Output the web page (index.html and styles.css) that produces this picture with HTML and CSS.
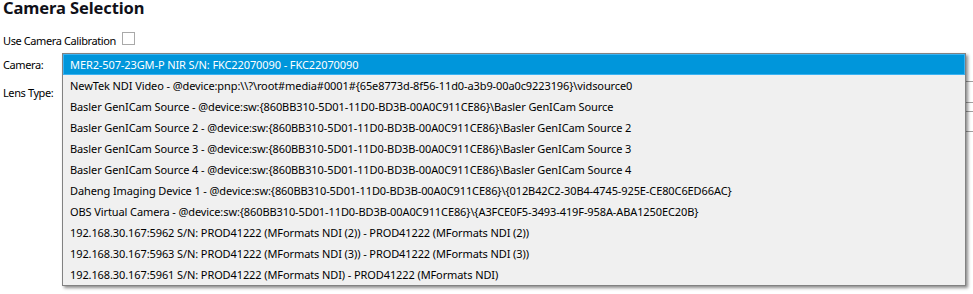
FILE: index.html
```html
<!DOCTYPE html>
<html lang="en">
<head>
  <meta charset="UTF-8">
  <title>Camera Selection</title>
  <link rel="stylesheet" href="styles.css">
</head>
<body>
  <div class="panel">
    <h1>Camera Selection</h1>
    <div class="row check-row">
      <span class="label-inline">Use Camera Calibration</span>
      <span class="checkbox"></span>
    </div>
    <div class="row camera-row">
      <span class="label">Camera:</span>
      <div class="combo-wrap">
        <div class="combo camera-combo"></div>
        <ul class="dropdown">
          <li class="selected">MER2-507-23GM-P NIR S/N: FKC22070090 - FKC22070090</li>
          <li>NewTek NDI Video - @device:pnp:\\?\root#media#0001#{65e8773d-8f56-11d0-a3b9-00a0c9223196}\vidsource0</li>
          <li>Basler GenICam Source - @device:sw:{860BB310-5D01-11D0-BD3B-00A0C911CE86}\Basler GenICam Source</li>
          <li>Basler GenICam Source 2 - @device:sw:{860BB310-5D01-11D0-BD3B-00A0C911CE86}\Basler GenICam Source 2</li>
          <li>Basler GenICam Source 3 - @device:sw:{860BB310-5D01-11D0-BD3B-00A0C911CE86}\Basler GenICam Source 3</li>
          <li>Basler GenICam Source 4 - @device:sw:{860BB310-5D01-11D0-BD3B-00A0C911CE86}\Basler GenICam Source 4</li>
          <li>Daheng Imaging Device 1 - @device:sw:{860BB310-5D01-11D0-BD3B-00A0C911CE86}\{012B42C2-30B4-4745-925E-CE80C6ED66AC}</li>
          <li>OBS Virtual Camera - @device:sw:{860BB310-5D01-11D0-BD3B-00A0C911CE86}\{A3FCE0F5-3493-419F-958A-ABA1250EC20B}</li>
          <li>192.168.30.167:5962 S/N: PROD41222 (MFormats NDI (2)) - PROD41222 (MFormats NDI (2))</li>
          <li>192.168.30.167:5963 S/N: PROD41222 (MFormats NDI (3)) - PROD41222 (MFormats NDI (3))</li>
          <li>192.168.30.167:5961 S/N: PROD41222 (MFormats NDI) - PROD41222 (MFormats NDI)</li>
        </ul>
      </div>
    </div>
    <div class="row lens-row">
      <span class="label">Lens Type:</span>
      <div class="combo"></div>
    </div>
    <div class="row extra-row">
      <span class="label"></span>
      <div class="combo"></div>
    </div>
  </div>
</body>
</html>
```

FILE: styles.css
```css
html, body {
  margin: 0;
  height: 294px;
  background: #ffffff;
}
body {
  color: #000000;
  font-family: 'Noto Sans', sans-serif;
  font-size: 11px;
}
.panel {
  padding-left: 3px;
}
h1 {
  margin: 0;
  font-size: 16.5px;
  font-weight: bold;
  line-height: 15px;
  letter-spacing: -0.1px;
  color: #101018;
}
.row {
  display: flex;
  align-items: flex-start;
  line-height: 21px;
  white-space: nowrap;
  letter-spacing: -0.4px;
}
.check-row {
  margin-top: 15px;
  height: 21px;
}
.label-inline {
  margin-right: 6px;
}
.checkbox {
  margin-top: 2px;
  width: 11px;
  height: 11px;
  border: 1px solid #a9a9a9;
  background: #fff;
}
.label {
  width: 59px;
  flex: none;
}
.camera-row {
  margin-top: 3px;
  height: 21px;
}
.lens-row {
  margin-top: 6px;
  line-height: 23px;
}
.extra-row {
  margin-top: 7px;
}
.combo-wrap {
  position: relative;
  width: 904px;
  flex: none;
}
.combo {
  flex: 1;
  height: 20px;
  border: 1px solid #a0a0a0;
  border-right: none;
  background: #fff;
}
.extra-row .combo {
  height: 19px;
}
.camera-combo {
  height: 19px;
  border-right: 1px solid #a0a0a0;
}
.dropdown {
  position: absolute;
  top: -1px;
  left: 0;
  box-sizing: border-box;
  width: 904px;
  margin: 0;
  padding: 0;
  list-style: none;
  background: #f0f0f0;
  border: 1px solid #828282;
  box-shadow: 2px 2px 3px rgba(0, 0, 0, 0.45);
  letter-spacing: -0.1px;
  z-index: 10;
}
.dropdown li {
  height: 21px;
  line-height: 21px;
  padding-left: 7px;
  overflow: hidden;
}
.dropdown li.selected {
  background: #0096db;
  color: #ffffff;
  border: 1px solid #3ab2f2;
  height: 19px;
  line-height: 19px;
  padding-left: 6px;
}
```
